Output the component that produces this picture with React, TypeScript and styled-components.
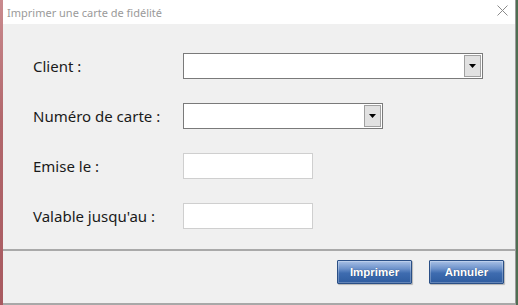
import React from 'react';
import styled, { createGlobalStyle } from 'styled-components';

const GlobalStyle = createGlobalStyle`
  html, body {
    margin: 0;
    padding: 0;
    width: 518px;
    height: 305px;
    overflow: hidden;
    background: #4f6e52;
  }
  #root {
    height: 305px;
  }
`;

const Desktop = styled.div`
  display: flex;
  height: 305px;
  width: 518px;
`;

const LeftEdge = styled.div`
  width: 3px;
  background: linear-gradient(to bottom, #c98a8e, #b2676c 40%, #a85a60);
`;

const Window = styled.div`
  flex: 0 0 513px;
  display: flex;
  flex-direction: column;
  background: #f0f0f0;
  border-right: 1px solid #9a9a9a;
  border-bottom: 2px solid #a8a8a8;
  box-sizing: border-box;
`;

const TitleBar = styled.div`
  height: 24px;
  flex: 0 0 24px;
  background: #ffffff;
  display: flex;
  align-items: center;
  justify-content: space-between;
  padding: 0 7px 0 4px;
  font-family: "Noto Sans", "Open Sans", sans-serif;
  font-size: 11px;
  color: #9a9a9a;
`;

const CloseIcon = styled.svg`
  width: 11px;
  height: 11px;
  margin-top: -3px;
`;

const Body = styled.div`
  flex: 1;
  display: grid;
  grid-template-columns: 150px 1fr;
  grid-auto-rows: 26px;
  row-gap: 24px;
  align-content: start;
  padding: 29px 0 0 30px;
`;

const Label = styled.div`
  display: flex;
  align-items: center;
  font-family: "Noto Sans", "Open Sans", sans-serif;
  font-size: 15px;
  color: #1a1a1a;
`;

const Combo = styled.div<{ $width: number }>`
  width: ${p => p.$width}px;
  height: 26px;
  box-sizing: border-box;
  background: #ffffff;
  border: 1px solid #7a7a7a;
  display: flex;
  justify-content: flex-end;
  align-items: center;
  padding-right: 1px;
`;

const ComboButton = styled.div`
  width: 17px;
  height: 22px;
  box-sizing: border-box;
  background: #e1e1e1;
  border: 1px solid #a0a0a0;
  display: flex;
  align-items: center;
  justify-content: center;
`;

const TextField = styled.div`
  width: 130px;
  height: 26px;
  box-sizing: border-box;
  background: #ffffff;
  border: 1px solid #cfcfcf;
`;

const Footer = styled.div`
  flex: 0 0 43px;
  border-top: 2px solid #a9a9a9;
  display: flex;
  justify-content: flex-end;
  align-items: flex-start;
  gap: 17px;
  padding: 9px 11px 0 0;
`;

const Button = styled.button`
  width: 75px;
  height: 24px;
  padding: 0;
  border: 1px solid #2a4f86;
  border-radius: 1px;
  background: linear-gradient(to bottom, #a9c1e6 0%, #6d92cb 35%, #3e6cb0 55%, #2f5c9f 100%);
  box-shadow: inset 0 0 0 1px rgba(255, 255, 255, 0.25), 1px 1px 1px rgba(0, 0, 0, 0.25);
  color: #ffffff;
  font-family: "Liberation Sans", Arial, sans-serif;
  font-weight: bold;
  font-size: 11.5px;
  text-shadow: 0 0 1px rgba(0, 0, 0, 0.4);
  cursor: pointer;
`;

const Arrow = () => (
  <svg width="7" height="4" viewBox="0 0 7 4">
    <path d="M0 0 H7 L3.5 4 Z" fill="#000" />
  </svg>
);

const App: React.FC = () => {
  return (
    <>
      <GlobalStyle />
      <Desktop>
        <LeftEdge />
        <Window>
          <TitleBar>
            <span>Imprimer une carte de fidélité</span>
            <CloseIcon viewBox="0 0 11 11">
              <path d="M0.5 0.5 L10.5 10.5 M10.5 0.5 L0.5 10.5" stroke="#8a8a8a" strokeWidth="1" />
            </CloseIcon>
          </TitleBar>
          <Body>
            <Label>Client :</Label>
            <Combo $width={300}>
              <ComboButton><Arrow /></ComboButton>
            </Combo>
            <Label>Numéro de carte :</Label>
            <Combo $width={200}>
              <ComboButton><Arrow /></ComboButton>
            </Combo>
            <Label>Emise le :</Label>
            <TextField />
            <Label>Valable jusqu'au :</Label>
            <TextField />
          </Body>
          <Footer>
            <Button>Imprimer</Button>
            <Button>Annuler</Button>
          </Footer>
        </Window>
      </Desktop>
    </>
  );
};

export default App;
